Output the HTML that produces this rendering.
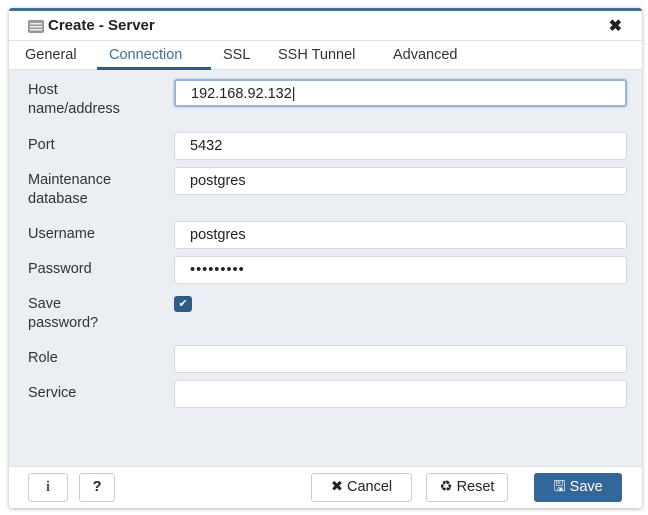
<!DOCTYPE html>
<html><head><meta charset="utf-8"><style>
*{box-sizing:border-box;margin:0;padding:0}
body{width:648px;height:515px;background:#fff;font-family:"Liberation Sans",sans-serif;position:relative;overflow:hidden;color:#222}
.dlg{position:absolute;left:9px;top:8px;width:633px;height:500px;background:#fff;border-top:3px solid #3f6f9a;box-shadow:0 1px 4px rgba(0,0,0,.3);border-radius:3px}
.hdr{position:absolute;left:0;top:0;width:100%;height:30px;border-bottom:1px solid #dde0e6}
.title{position:absolute;left:39px;top:6px;font-size:15px;font-weight:bold;color:#222}
.x{position:absolute;right:20px;top:5px;font-size:16px;font-weight:bold}
.tabs{position:absolute;top:31px;left:0;width:100%;height:28px;border-bottom:1px solid #dde0e6;font-size:14.5px;color:#333}
.tabs span{position:absolute;top:5px}
.body{position:absolute;top:59px;left:0;width:100%;height:396px;background:#ebeef3}
.lbl{position:absolute;left:19px;font-size:14.5px;color:#333;line-height:19px}
.in{position:absolute;left:165px;width:453px;height:28px;background:#fff;border:1px solid #d3d7de;border-radius:3px;font-size:14.5px;padding:5px 15px;color:#222}
.foot{position:absolute;top:455px;left:0;width:100%;height:45px;border-top:1px solid #dde0e6}
.b{position:absolute;top:6px;height:29px;border:1px solid #c9ccd2;border-radius:3px;font-size:14.5px;text-align:center;line-height:27px;color:#222;background:#fff}
</style></head><body>
<div class="dlg">
<div class="hdr">
<svg style="position:absolute;left:19px;top:9px" width="16" height="13"><rect x="0" y="0" width="16" height="13" rx="2" fill="#999"/><rect x="2" y="3" width="12" height="1.5" fill="#eee"/><rect x="2" y="6" width="12" height="1.5" fill="#eee"/><rect x="2" y="9" width="12" height="1.5" fill="#eee"/></svg>
<div class="title">Create - Server</div><div class="x">✖</div></div>
<div class="tabs"><span style="left:16px">General</span><span style="left:100px;color:#3f6f9a">Connection</span><span style="left:214px">SSL</span><span style="left:269px">SSH Tunnel</span><span style="left:384px">Advanced</span>
<div style="position:absolute;left:88px;top:25px;width:114px;height:3px;background:#2c5d87"></div></div>
<div class="body">
<div class="lbl" style="top:11px">Host<br>name/address</div>
<div class="in" style="top:9px;border:2px solid #9ab6d3;box-shadow:0 0 2px #9ab6d3">192.168.92.132|</div>
<div class="lbl" style="top:66px">Port</div><div class="in" style="top:62px">5432</div>
<div class="lbl" style="top:101px">Maintenance<br>database</div><div class="in" style="top:97px">postgres</div>
<div class="lbl" style="top:155px">Username</div><div class="in" style="top:151px">postgres</div>
<div class="lbl" style="top:190px">Password</div><div class="in" style="top:186px;letter-spacing:1px">•••••••••</div>
<div class="lbl" style="top:225px">Save<br>password?</div>
<div style="position:absolute;left:165px;top:226px;width:18px;height:16px;background:#2c5d87;border-radius:3px;color:#fff;font-size:11px;text-align:center;line-height:16px">✔</div>
<div class="lbl" style="top:279px">Role</div><div class="in" style="top:275px"></div>
<div class="lbl" style="top:314px">Service</div><div class="in" style="top:310px"></div>
</div>
<div class="foot">
<div class="b" style="left:19px;width:40px;font-weight:bold;font-family:'Liberation Serif',serif;color:#555">i</div>
<div class="b" style="left:70px;width:36px;font-weight:bold">?</div>
<div class="b" style="left:302px;width:101px">✖ Cancel</div>
<div class="b" style="left:417px;width:82px">♻ Reset</div>
<div class="b" style="left:525px;width:88px;background:#336699;border-color:#336699;color:#fff">🖫 Save</div>
</div>
</div>
</body></html>
